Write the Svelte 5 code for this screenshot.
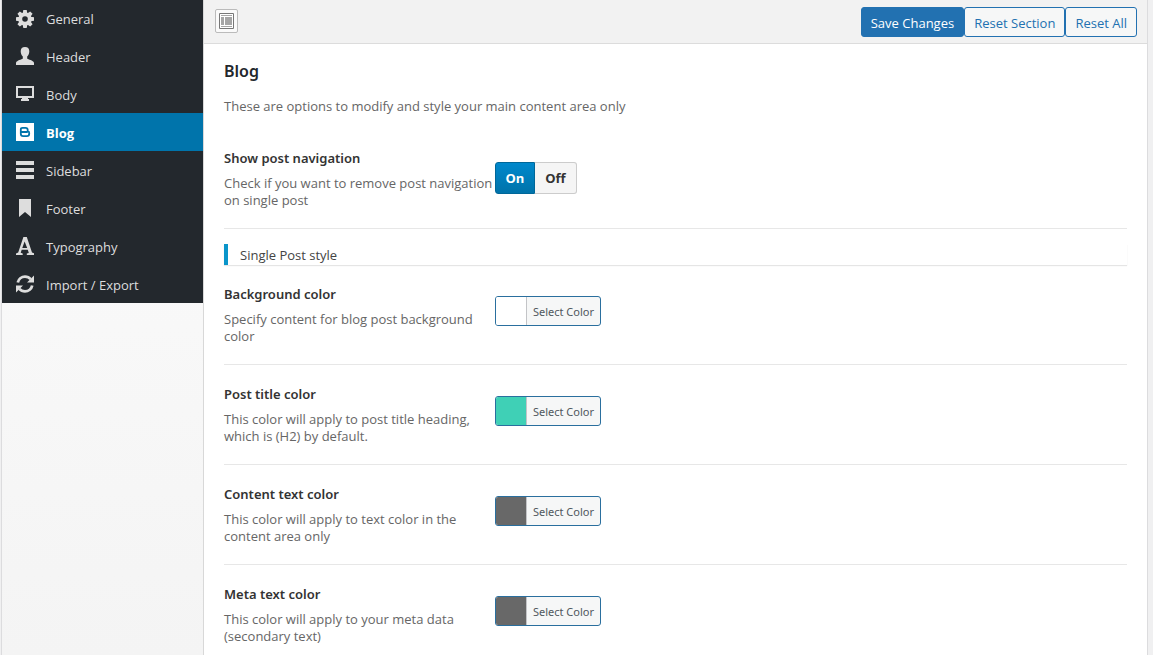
<script>
  const sections = ['General', 'Header', 'Body', 'Blog', 'Sidebar', 'Footer', 'Typography', 'Import / Export'];
  let active = $state('Blog');
  let navigation = $state('on');

  const colors = [
    { title: 'Background color', desc: 'Specify content for blog post background color', value: '#ffffff' },
    { title: 'Post title color', desc: 'This color will apply to post title heading, which is (H2) by default.', value: '#3fd0b6' },
    { title: 'Content text color', desc: 'This color will apply to text color in the content area only', value: '#686868' },
    { title: 'Meta text color', desc: 'This color will apply to your meta data (secondary text)', value: '#686868' }
  ];
</script>

{#snippet icon(name)}
  <svg viewBox="0 0 18 18" width="18" height="18" aria-hidden="true">
    {#if name === 'General'}
      <g fill="currentColor">
        {#each [0, 45, 90, 135] as angle}
          <path d="M7 1.800L7.300 0h3.400l.3 1.800v14.400l-.3 1.800H7.300L7 16.200z" transform="rotate({angle} 9 9)" />
        {/each}
        <circle cx="9" cy="9" r="6.8" />
      </g>
      <circle cx="9" cy="9" r="2.8" fill="#23282d" />
    {:else if name === 'Header'}
      <path fill="currentColor" d="M9 0c2.800 0 4.300 1.500 4.300 4.200 0 2.300-.8 4-2.100 5.300v2.100c1 1.100 6 1.700 6.800 4.200V18H0v-2.200c.8-2.500 5.800-3.100 6.800-4.200V9.500C5.500 8.200 4.700 6.500 4.700 4.200 4.700 1.500 6.200 0 9 0z" />
    {:else if name === 'Body'}
      <path fill="currentColor" fill-rule="evenodd" d="M0 1h18v12h-6v1h1v2H5v-2h1v-1H0zM2 3v8h14V3z" />
    {:else if name === 'Blog'}
      <path fill="currentColor" d="M0 0h18v18H0z" />
      <path fill="none" stroke="#0074ab" stroke-width="1.800" stroke-linejoin="round" d="M6.500 4.800h3q2.200 0 2.200 2.200v1.200q1.500.2 1.500 1.800v.8q0 2.400-2.400 2.400H7.200q-2.400 0-2.400-2.400V6.500q0-1.700 1.700-1.700zM5 9h6.700" />
    {:else if name === 'Sidebar'}
      <path fill="currentColor" d="M0 0h18v4H0zM0 7h18v4H0zM0 14h18v4H0z" />
    {:else if name === 'Footer'}
      <path fill="currentColor" d="M3 0h12v18l-6-5-6 5z" />
    {:else if name === 'Typography'}
      <path fill="currentColor" fill-rule="evenodd" d="M7.400 0h3.400l5.200 15.500 2 .8V18h-7.200v-1.500l2-.6-1-3.100H5.700l-1 3 2 .7V18H0v-1.600l2.200-.9zM8.600 4.500L6.300 11h4.900z" />
    {:else}
      <path fill="none" stroke="currentColor" stroke-width="2.800" d="M1.800 7.500C2.500 4 5.500 1.700 9 1.700c2.300 0 4.200.8 5.600 2.500M16.200 10.500C15.500 14 12.500 16.300 9 16.300c-2.300 0-4.200-.8-5.600-2.500" />
      <path fill="currentColor" d="M18 .5v7h-7zM0 17.500v-7h7z" />
    {/if}
  </svg>
{/snippet}

<div class="page">
  <div class="panel">
    <nav class="sidebar" aria-label="Option sections">
      <ul>
        {#each sections as section}
          <li>
            <a href="#options" class:active={active === section} onclick={() => (active = section)}>
              {@render icon(section)}
              <span>{section}</span>
            </a>
          </li>
        {/each}
      </ul>
    </nav>

    <main>
      <header class="toolbar">
        <button type="button" class="expand" aria-label="Expand options">
          <svg viewBox="0 0 16 16" width="16" height="16" aria-hidden="true">
            <path fill="#fff" stroke="#777" d="M.5.500h14v15H.5z" />
            <path fill="#a5a5a5" d="M2 2h11v1H2zM2 4h3v8H2zM6 4h7v8H6zM2 13h11v1H2z" />
          </svg>
        </button>
        <div class="actions">
          <button type="button" class="button primary">Save Changes</button>
          <button type="button" class="button">Reset Section</button>
          <button type="button" class="button">Reset All</button>
        </div>
      </header>

      <div class="content">
        <h1>Blog</h1>
        <p class="intro">These are options to modify and style your main content area only</p>

        <section class="row">
          <div class="label">
            <h2 id="nav-title">Show post navigation</h2>
            <p>Check if you want to remove post navigation on single post</p>
          </div>
          <div class="switch" role="group" aria-labelledby="nav-title">
            <button type="button" class:selected={navigation === 'on'} aria-pressed={navigation === 'on'} onclick={() => (navigation = 'on')}>On</button>
            <button type="button" class:selected={navigation === 'off'} aria-pressed={navigation === 'off'} onclick={() => (navigation = 'off')}>Off</button>
          </div>
        </section>

        <h3 class="divider">Single Post style</h3>

        {#each colors as color, i}
          <section class="row">
            <div class="label">
              <h2 id="color-{i}">{color.title}</h2>
              <p>{color.desc}</p>
            </div>
            <button type="button" class="picker" aria-describedby="color-{i}">
              <span class="swatch" style="background-color: {color.value}"></span>
              <span class="caption">Select Color</span>
            </button>
          </section>
        {/each}
      </div>
    </main>
  </div>
</div>

<style>
  :global(body) {
    background: #f0f0f1;
    overflow: hidden;
  }

  .page {
    box-sizing: border-box;
    height: 100vh;
    overflow: hidden;
    padding: 0 5px 0 1px;
    font: 13px/17px "Open Sans", "Noto Sans", sans-serif;
    color: #666;
  }

  .page * {
    box-sizing: border-box;
  }

  h1, h2, h3, p, ul {
    margin: 0;
    padding: 0;
  }

  button {
    font-family: inherit;
    cursor: pointer;
  }

  .panel {
    display: flex;
    min-height: 100%;
    border: solid #dcdcde;
    border-width: 0 1px;
  }

  .sidebar {
    flex: 0 0 202px;
    border-right: 1px solid #d8d8d8;
    background: linear-gradient(#fcfcfc, #f4f4f4);
    background-size: 100% 100vh;
  }

  .sidebar ul {
    list-style: none;
  }

  .sidebar a {
    display: flex;
    align-items: center;
    gap: 12px;
    height: 38px;
    padding: 0 14px;
    background: #23282d;
    color: #ddd;
    text-decoration: none;
  }

  .sidebar li:first-child a {
    height: 37px;
  }

  .sidebar a.active {
    background: #0074ab;
    color: #fff;
    font-weight: 700;
  }

  .sidebar span {
    padding-top: 2px;
  }

  main {
    flex: 1;
    min-width: 0;
    background: #fff;
  }

  .toolbar {
    display: flex;
    justify-content: space-between;
    align-items: flex-start;
    height: 44px;
    padding: 7px 10px 0 11px;
    border-bottom: 1px solid #dcdcdc;
    background: #f2f2f2;
  }

  .expand {
    display: grid;
    place-items: center;
    width: 23px;
    height: 24px;
    margin-top: 2px;
    padding: 0;
    border: 1px solid #bbb;
    border-radius: 2px;
    background: #fafafa;
  }

  .actions {
    display: flex;
  }

  .button {
    height: 30px;
    padding: 2px 9px 0;
    border: 1px solid #2271b1;
    border-radius: 3px;
    background: #f6f7f7;
    color: #2271b1;
    font-size: 13px;
  }

  .button.primary {
    background: #2271b1;
    color: #fff;
  }

  .content {
    padding: 16px 20px 0;
  }

  h1 {
    color: #23282d;
    font-family: "Noto Sans", sans-serif;
    font-size: 16px;
    font-weight: 600;
    line-height: 22px;
  }

  .intro {
    padding: 16px 0 14px;
  }

  .row {
    display: flex;
    align-items: flex-start;
    min-height: 100px;
    border-bottom: 1px solid #e7e7e7;
  }

  .label {
    flex: 0 0 30%;
    padding: 19px 0;
  }

  .label h2 {
    margin-bottom: 7px;
    color: #333;
    font-family: "Noto Sans", sans-serif;
    font-size: 13px;
    font-weight: 600;
    line-height: 20px;
  }

  .switch {
    display: flex;
    margin-top: 33px;
  }

  .switch button {
    width: 42px;
    height: 32px;
    padding: 0;
    border: 1px solid #ccc;
    border-left: 0;
    border-radius: 0 3px 3px 0;
    background: #f5f5f5;
    color: #333;
    font-size: 13px;
    font-weight: 700;
  }

  .switch button:first-child {
    width: 40px;
    border-left: 1px solid #ccc;
    border-radius: 3px 0 0 3px;
  }

  .switch button.selected {
    border-color: #006799;
    background: linear-gradient(#0088cc, #0073aa);
    color: #fff;
  }

  .divider {
    margin-top: 15px;
    padding: 3px 12px 1px;
    border-left: 4px solid #0a95ca;
    box-shadow: 0 1px 1px rgba(0, 0, 0, 0.1);
    color: #444;
    font-size: 13px;
    font-weight: 400;
    line-height: 17px;
  }

  .picker {
    display: flex;
    height: 30px;
    margin-top: 31px;
    padding: 0;
    overflow: hidden;
    border: 1px solid #2a6f9e;
    border-radius: 3px;
    background: #f6f7f7;
    color: #50575e;
    font-family: "Noto Sans", sans-serif;
    font-size: 11px;
    line-height: 28px;
  }

  .swatch {
    width: 30px;
    height: 28px;
  }

  .caption {
    height: 28px;
    padding: 1px 6px 0;
    border-left: 1px solid #c3c4c7;
  }
</style>
